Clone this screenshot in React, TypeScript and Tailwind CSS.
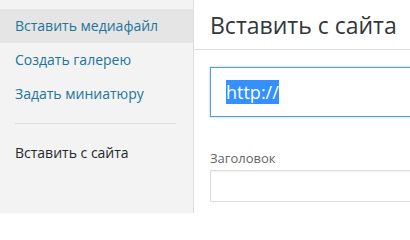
const menuItems = [
  { id: "insert", label: "Вставить медиафайл", hover: true },
  { id: "gallery", label: "Создать галерею" },
  { id: "featured", label: "Задать миниатюру" },
];

export default function App() {
  return (
    <div
      className="flex h-[213px] w-[410px] overflow-hidden bg-white"
      style={{ fontFamily: '"Open Sans", "Liberation Sans", sans-serif' }}
    >
      {/* Боковое меню */}
      <div className="w-[194px] shrink-0 border-r border-[#dddddd] bg-[#f3f3f3] pt-[9px]">
        {menuItems.map(item => (
          <div
            key={item.id}
            className={`px-[15px] py-2 text-[14px] leading-[18px] text-[#21759b] ${item.hover ? "bg-[#e5e5e5]" : ""}`}
          >
            {item.label}
          </div>
        ))}
        <div className="ml-[15px] mr-[17px] my-3 h-px bg-[#dddddd]" />
        <div className="px-[15px] py-2 text-[14px] leading-[18px] text-[#23282d]">
          Вставить с сайта
        </div>
      </div>

      {/* Контент */}
      <div className="flex-1 overflow-hidden">
        <div className="h-[50px] border-b border-[#dddddd] pl-4">
          <h1 className="m-0 whitespace-nowrap text-[23px] font-normal leading-[50px] text-[#32373c]">
            Вставить с сайта
          </h1>
        </div>
        <div className="pl-4 pt-[17px]">
          <div className="w-[400px] border border-[#5b9dd9] py-3 pl-[15px] text-[18px] leading-6 shadow-[0_0_2px_rgba(30,140,190,0.5)]">
            <span className="bg-[#3390ff] text-white">http://</span>
          </div>
          <label className="mt-[32px] block text-[13px] leading-[18px] text-[#666666]">
            Заголовок
          </label>
          <div className="mt-[3px] h-8 w-[400px] border border-[#dddddd] shadow-[inset_0_1px_2px_rgba(0,0,0,0.07)]" />
        </div>
      </div>
    </div>
  );
}
